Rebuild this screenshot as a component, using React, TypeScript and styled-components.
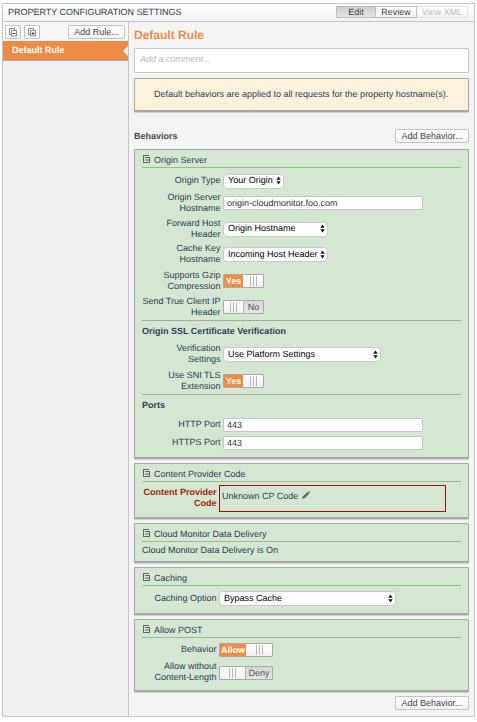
import React from "react";
import styled, { createGlobalStyle } from "styled-components";

const GlobalStyle = createGlobalStyle`
  *, *::before, *::after { box-sizing: border-box; }
  body {
    margin: 0;
    background: #fff;
    font: 9px/11px "Liberation Sans", Arial, sans-serif;
    color: #2d4052;
    text-rendering: geometricPrecision;
    white-space: nowrap;
  }
  svg { display: block; flex: none; }
`;

const Frame = styled.div`
  width: 473px;
  height: 714px;
  margin: 3px 0 0 2px;
  border: 1px solid #c5c5c5;
  background: #f4f4f4;
  display: flex;
  flex-direction: column;
`;

const Header = styled.header`
  height: 18px;
  flex: none;
  display: flex;
  align-items: center;
  justify-content: space-between;
  padding: 0 6px 0 5px;
  border-bottom: 1px solid #c5c5c5;
  background: linear-gradient(#fff, #f3f3f3);
  letter-spacing: -0.02px;
`;

const TabGroup = styled.div`
  display: flex;
  margin-top: -1px;
`;

const Tab = styled.div<{ $width: number; $state?: "active" | "disabled" }>`
  width: ${(p) => p.$width}px;
  height: 12px;
  line-height: 11px;
  text-align: center;
  letter-spacing: 0;
  border: 1px solid ${(p) => (p.$state === "disabled" ? "#e2e2e2" : "#bdbdbd")};
  border-left-width: ${(p) => (p.$state === "active" ? 1 : 0)}px;
  color: ${(p) => (p.$state === "disabled" ? "#bdbdbd" : "#444")};
  background: ${(p) =>
    p.$state === "active" ? "linear-gradient(#cdcdcd, #e6e6e6)" : "linear-gradient(#fff, #f4f4f4)"};
`;

const Body = styled.div`
  flex: 1;
  display: flex;
  min-height: 0;
`;

const Sidebar = styled.aside`
  width: 126px;
  flex: none;
  border-right: 1px solid #c5c5c5;
  background: #f0f0f2;
`;

const SidebarTools = styled.div`
  height: 19px;
  display: flex;
  align-items: flex-start;
  gap: 3px;
  padding: 3px 3px 0 2px;
  background: #f7f7f7;
`;

const Button = styled.button<{ $width: number }>`
  width: ${(p) => p.$width}px;
  height: 14px;
  padding: 0;
  display: flex;
  align-items: center;
  justify-content: center;
  border: 1px solid #c4c4c4;
  border-radius: 1px;
  background: linear-gradient(#fff, #f3f3f3);
  color: #444;
  font: inherit;
  line-height: 12px;
`;

const Spacer = styled.div`
  flex: 1;
`;

const RuleItem = styled.div`
  height: 20px;
  display: flex;
  align-items: center;
  justify-content: space-between;
  padding-left: 9px;
  border-bottom: 1px solid #aaa;
  background: #ee8b45;
  color: #fff;
  font-weight: bold;
`;

const RuleName = styled.span`
  margin-top: -1px;
`;

const Main = styled.main`
  flex: 1;
  padding: 0 5px;
  display: flex;
  flex-direction: column;
`;

const RuleTitle = styled.h1`
  margin: 0;
  height: 26px;
  font-size: 12px;
  line-height: 26px;
  color: #ee8b45;
`;

const CommentBox = styled.div`
  height: 25px;
  flex: none;
  padding: 0 5px;
  border: 1px solid #c8c8c8;
  border-radius: 1px;
  background: #fff;
  color: #b8b8b8;
  font-style: italic;
  line-height: 21px;
`;

const Notice = styled.div`
  height: 34px;
  flex: none;
  margin-top: 5px;
  border: 1px solid #a8a8a8;
  border-bottom-width: 2px;
  border-radius: 1px;
  background: #faf2db;
  box-shadow: 0 1px 1px #ccc;
  padding-left: 19px;
  line-height: 30px;
`;

const BehaviorsBar = styled.div`
  height: 14px;
  flex: none;
  margin: 17px 0 6px;
  display: flex;
  align-items: center;
  justify-content: space-between;
  font-weight: bold;
  color: #474747;

  ${Button} {
    font-weight: normal;
  }
`;

const FooterBar = styled.div`
  display: flex;
  justify-content: flex-end;
`;

const Panel = styled.section<{ $height: number }>`
  height: ${(p) => p.$height}px;
  flex: none;
  margin-bottom: 4px;
  padding: 0 7px;
  border: 1px solid #a8a8a8;
  border-bottom-width: 2px;
  border-radius: 1px;
  background: #d5e7d2;
  box-shadow: 0 1px 1px #ccc;
`;

const PanelHead = styled.div`
  height: 18px;
  display: flex;
  align-items: center;
  gap: 4px;
  padding: 3px 0 0 1px;
  border-bottom: 1px solid #93c08d;
`;

const SubHeading = styled.h2<{ $height: number }>`
  margin: 0;
  height: ${(p) => p.$height}px;
  border-top: 1px solid #a8a8a8;
  font-size: 9px;
  line-height: 20px;
`;

const Row = styled.div<{ $height: number; $label?: number; $top?: number }>`
  height: ${(p) => p.$height}px;
  padding-top: ${(p) => p.$top ?? 0}px;
  display: grid;
  grid-template-columns: ${(p) => p.$label ?? 79}px auto;
  justify-content: start;
  align-items: center;
  column-gap: 2px;
`;

const Label = styled.div<{ $required?: boolean }>`
  display: flex;
  flex-direction: column;
  align-items: flex-end;
  margin-top: -1px;
  padding-right: 0.5px;
  ${(p) => p.$required && "color: #a31c0c; font-weight: bold;"}
`;

const SelectBox = styled.div<{ $width: number }>`
  width: ${(p) => p.$width}px;
  height: 15px;
  display: flex;
  align-items: center;
  justify-content: space-between;
  padding: 0 2px 1px 4px;
  border: 1px solid #c6cdc5;
  border-radius: 4px;
  background: #fff;
  color: #000;
`;

const TextInput = styled.div`
  width: 200px;
  height: 14px;
  padding-left: 3px;
  border: 1px solid #c3c8c2;
  border-radius: 1px;
  background: #fff;
  color: #333;
  line-height: 12px;
`;

const Switch = styled.div<{ $width: number }>`
  width: ${(p) => p.$width}px;
  height: 14px;
  display: flex;
  border: 1px solid #a9a9a9;
  border-radius: 1px;
`;

const SwitchText = styled.div<{ $on: boolean; $width: number }>`
  width: ${(p) => p.$width}px;
  line-height: 13px;
  text-align: center;
  background: ${(p) => (p.$on ? "#ee8b45" : "linear-gradient(#d6d6d6, #e6e6e6)")};
  color: ${(p) => (p.$on ? "#fff" : "#555")};
  font-weight: ${(p) => (p.$on ? "bold" : "normal")};
  ${(p) => !p.$on && "border-left: 1px solid #b5b5b5;"}
`;

const Knob = styled.div`
  flex: 1;
  display: flex;
  align-items: center;
  justify-content: center;
  gap: 2px;
  background: linear-gradient(#fff, #f1f1f1);
`;

const Grip = styled.i`
  width: 1px;
  height: 10px;
  background: #b9b9b9;
`;

const CodeBox = styled.div`
  width: 227px;
  height: 27px;
  display: flex;
  align-items: flex-start;
  gap: 4px;
  padding: 5px 0 0 2px;
  border: 1px solid #961705;
`;

const Lift = styled.div`
  margin-top: -1px;
`;

const StatusText = styled.div`
  line-height: 16px;
`;

function DocIcon() {
  return (
    <svg width="7" height="9" viewBox="0 0 7 9" fill="none" stroke="#666">
      <path d="M.5 0v8M0 .5h6M0 7.500h7M6.500 2v6" />
      <path d="M2 2.500h4M2 5h4" />
    </svg>
  );
}

function TreeIcon({ plus }: { plus?: boolean }) {
  return (
    <svg width="9" height="9" viewBox="0 0 9 9" fill="none" stroke="#888">
      <path d="M2.500 6.500h-2v-6h5v2" />
      <path d="M2.500 2.500h5v5.500h-5z" fill="#fff" />
      <path d={plus ? "M3.500 5.500h3M5 4v3" : "M3.500 5.500h3"} stroke="#444" />
    </svg>
  );
}

function Arrows() {
  return (
    <svg width="5" height="9" viewBox="0 0 5 9" fill="#111">
      <path d="M2.500 .4 4.700 3.800H.3zM2.500 8.600.3 5.200h4.400z" />
    </svg>
  );
}

function Pencil() {
  return (
    <svg width="9" height="9" viewBox="0 0 9 9">
      <path d="M0 8 .8 5.500 5.600 .9 7.400 2.600 2.500 7.300z" fill="#666" />
      <path d="M6.200.6 7.200 0 8.500 1.200 7.900 2.200z" fill="#777" />
    </svg>
  );
}

function Notch() {
  return (
    <svg width="5" height="10" viewBox="0 0 5 10">
      <path d="M5 0v10L0 5z" fill="#f4f4f4" />
    </svg>
  );
}

function Field({
  lines,
  height,
  label,
  top,
  required,
  children,
}: {
  lines: string[];
  height: number;
  label?: number;
  top?: number;
  required?: boolean;
  children: React.ReactNode;
}) {
  return (
    <Row $height={height} $label={label} $top={top}>
      <Label $required={required}>
        {lines.map((line) => (
          <span key={line}>{line}</span>
        ))}
      </Label>
      {children}
    </Row>
  );
}

function Select({ width, value }: { width: number; value: string }) {
  return (
    <SelectBox $width={width}>
      {value}
      <Arrows />
    </SelectBox>
  );
}

function Toggle({ on, text, width, part }: { on: boolean; text: string; width: number; part: number }) {
  const caption = (
    <SwitchText $on={on} $width={part}>
      {text}
    </SwitchText>
  );
  return (
    <Switch $width={width}>
      {on && caption}
      <Knob>
        <Grip />
        <Grip />
        <Grip />
      </Knob>
      {!on && caption}
    </Switch>
  );
}

function Behavior({ title, height, children }: { title: string; height: number; children: React.ReactNode }) {
  return (
    <Panel $height={height}>
      <PanelHead>
        <Lift>
          <DocIcon />
        </Lift>
        {title}
      </PanelHead>
      {children}
    </Panel>
  );
}

export default function App() {
  return (
    <>
      <GlobalStyle />
      <Frame>
        <Header>
          <span>PROPERTY CONFIGURATION SETTINGS</span>
          <TabGroup>
            <Tab $width={40} $state="active">Edit</Tab>
            <Tab $width={41}>Review</Tab>
            <Tab $width={51} $state="disabled">View XML</Tab>
          </TabGroup>
        </Header>
        <Body>
          <Sidebar>
            <SidebarTools>
              <Button $width={16}><TreeIcon /></Button>
              <Button $width={16}><TreeIcon plus /></Button>
              <Spacer />
              <Button $width={57}>Add Rule...</Button>
            </SidebarTools>
            <RuleItem>
              <RuleName>Default Rule</RuleName>
              <Notch />
            </RuleItem>
          </Sidebar>
          <Main>
            <RuleTitle>Default Rule</RuleTitle>
            <CommentBox>Add a comment...</CommentBox>
            <Notice>Default behaviors are applied to all requests for the property hostname(s).</Notice>
            <BehaviorsBar>
              Behaviors
              <Button $width={74}>Add Behavior...</Button>
            </BehaviorsBar>

            <Behavior title="Origin Server" height={310}>
              <Field lines={["Origin Type"]} height={22} top={4}>
                <Select width={61} value="Your Origin" />
              </Field>
              <Field lines={["Origin Server", "Hostname"]} height={26}>
                <TextInput>origin-cloudmonitor.foo.com</TextInput>
              </Field>
              <Field lines={["Forward Host", "Header"]} height={25} top={1}>
                <Select width={105} value="Origin Hostname" />
              </Field>
              <Field lines={["Cache Key", "Hostname"]} height={27}>
                <Select width={105} value="Incoming Host Header" />
              </Field>
              <Field lines={["Supports Gzip", "Compression"]} height={26}>
                <Toggle on text="Yes" width={41} part={19} />
              </Field>
              <Field lines={["Send True Client IP", "Header"]} height={26}>
                <Toggle on={false} text="No" width={41} part={20} />
              </Field>
              <SubHeading $height={21}>Origin SSL Certificate Verification</SubHeading>
              <Field lines={["Verification", "Settings"]} height={27}>
                <Select width={158} value="Use Platform Settings" />
              </Field>
              <Field lines={["Use SNI TLS", "Extension"]} height={26}>
                <Toggle on text="Yes" width={41} part={19} />
              </Field>
              <SubHeading $height={22}>Ports</SubHeading>
              <Field lines={["HTTP Port"]} height={18}>
                <TextInput>443</TextInput>
              </Field>
              <Field lines={["HTTPS Port"]} height={18}>
                <TextInput>443</TextInput>
              </Field>
            </Behavior>

            <Behavior title="Content Provider Code" height={56}>
              <Field lines={["Content Provider", "Code"]} height={33} label={75} required>
                <CodeBox>
                  Unknown CP Code
                  <Pencil />
                </CodeBox>
              </Field>
            </Behavior>

            <Behavior title="Cloud Monitor Data Delivery" height={40}>
              <StatusText>Cloud Monitor Data Delivery is On</StatusText>
            </Behavior>

            <Behavior title="Caching" height={48}>
              <Field lines={["Caching Option"]} height={25} label={75}>
                <Select width={177} value="Bypass Cache" />
              </Field>
            </Behavior>

            <Behavior title="Allow POST" height={73}>
              <Field lines={["Behavior"]} height={24} label={75}>
                <Toggle on text="Allow" width={54} part={26} />
              </Field>
              <Field lines={["Allow without", "Content-Length"]} height={20} label={75}>
                <Toggle on={false} text="Deny" width={54} part={27} />
              </Field>
            </Behavior>

            <FooterBar>
              <Button $width={74}>Add Behavior...</Button>
            </FooterBar>
          </Main>
        </Body>
      </Frame>
    </>
  );
}
